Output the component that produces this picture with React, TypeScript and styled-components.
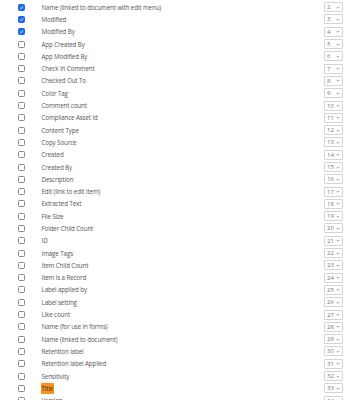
import React from 'react';
import styled, { createGlobalStyle } from 'styled-components';

const GlobalStyle = createGlobalStyle`
  html, body {
    margin: 0;
    padding: 0;
    background: #ffffff;
  }
  body {
    font-family: 'Open Sans', 'Noto Sans', sans-serif;
  }
`;

const List = styled.div`
  width: 358px;
  height: 400px;
  overflow: hidden;
  padding-top: 1px;
  box-sizing: border-box;
`;

const Row = styled.div`
  height: 12.3px;
  display: grid;
  grid-template-columns: 41px 1fr 19px 15px;
  align-items: center;
`;

const CheckCell = styled.div`
  display: flex;
  justify-content: center;
  padding-left: 1px;
`;

const Box = styled.span<{ $checked: boolean }>`
  width: 7px;
  height: 7px;
  box-sizing: border-box;
  border-radius: 1.5px;
  display: flex;
  align-items: center;
  justify-content: center;
  background: ${(p) => (p.$checked ? '#1769ee' : '#ffffff')};
  border: 1px solid ${(p) => (p.$checked ? '#1769ee' : '#8a8a8a')};
`;

const Label = styled.span<{ $hit?: boolean }>`
  font-size: 6.2px;
  letter-spacing: -0.1px;
  white-space: nowrap;
  justify-self: start;
  line-height: 11px;
  padding: 0 0.5px;
  background: ${(p) => (p.$hit ? '#f7941e' : 'transparent')};
  color: ${(p) => (p.$hit ? '#333333' : '#555555')};
`;

const Select = styled.div`
  height: 10px;
  box-sizing: border-box;
  border: 1px solid #d4d4d4;
  border-radius: 1px;
  display: flex;
  align-items: center;
  justify-content: space-between;
  padding: 0 2px 0 2px;
  font-size: 6px;
  color: #777777;
`;

const columns = [
  'Name (linked to document with edit menu)',
  'Modified',
  'Modified By',
  'App Created By',
  'App Modified By',
  'Check In Comment',
  'Checked Out To',
  'Color Tag',
  'Comment count',
  'Compliance Asset Id',
  'Content Type',
  'Copy Source',
  'Created',
  'Created By',
  'Description',
  'Edit (link to edit item)',
  'Extracted Text',
  'File Size',
  'Folder Child Count',
  'ID',
  'Image Tags',
  'Item Child Count',
  'Item is a Record',
  'Label applied by',
  'Label setting',
  'Like count',
  'Name (for use in forms)',
  'Name (linked to document)',
  'Retention label',
  'Retention label Applied',
  'Sensitivity',
  'Title',
  'Version',
];

const Chevron = () => (
  <svg width="4" height="3" viewBox="0 0 8 5">
    <path d="M1 1l3 3 3-3" fill="none" stroke="#6b6b6b" strokeWidth="1.3" />
  </svg>
);

const Tick = () => (
  <svg width="5" height="5" viewBox="0 0 10 10">
    <path d="M2 5.2l2.2 2.2L8.2 2.6" fill="none" stroke="#ffffff" strokeWidth="1.8" />
  </svg>
);

const App = () => {
  return (
    <List>
      <GlobalStyle />
      {columns.map((name, i) => (
        <Row key={name}>
          <CheckCell>
            <Box $checked={i < 3}>{i < 3 && <Tick />}</Box>
          </CheckCell>
          <Label $hit={name === 'Title'}>{name}</Label>
          <Select>
            <span>{i + 2}</span>
            <Chevron />
          </Select>
        </Row>
      ))}
    </List>
  );
};

export default App;
